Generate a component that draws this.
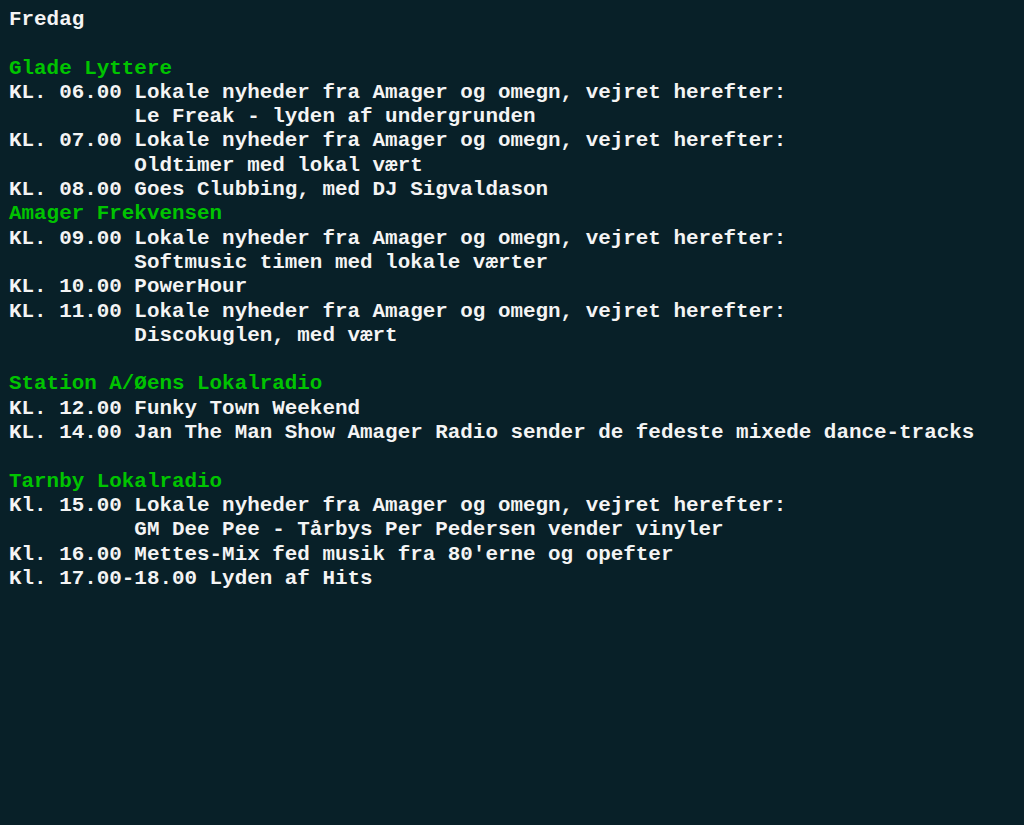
const lines: { t: string; g?: boolean }[] = [
  { t: "Fredag" },
  { t: "" },
  { t: "Glade Lyttere", g: true },
  { t: "KL. 06.00 Lokale nyheder fra Amager og omegn, vejret herefter:" },
  { t: "          Le Freak - lyden af undergrunden" },
  { t: "KL. 07.00 Lokale nyheder fra Amager og omegn, vejret herefter:" },
  { t: "          Oldtimer med lokal vært" },
  { t: "KL. 08.00 Goes Clubbing, med DJ Sigvaldason" },
  { t: "Amager Frekvensen", g: true },
  { t: "KL. 09.00 Lokale nyheder fra Amager og omegn, vejret herefter:" },
  { t: "          Softmusic timen med lokale værter" },
  { t: "KL. 10.00 PowerHour" },
  { t: "KL. 11.00 Lokale nyheder fra Amager og omegn, vejret herefter:" },
  { t: "          Discokuglen, med vært" },
  { t: "" },
  { t: "Station A/Øens Lokalradio", g: true },
  { t: "KL. 12.00 Funky Town Weekend" },
  { t: "KL. 14.00 Jan The Man Show Amager Radio sender de fedeste mixede dance-tracks" },
  { t: "" },
  { t: "Tarnby Lokalradio", g: true },
  { t: "Kl. 15.00 Lokale nyheder fra Amager og omegn, vejret herefter:" },
  { t: "          GM Dee Pee - Tårbys Per Pedersen vender vinyler" },
  { t: "Kl. 16.00 Mettes-Mix fed musik fra 80'erne og opefter" },
  { t: "Kl. 17.00-18.00 Lyden af Hits" },
];

export default function App() {
  return (
    <div className="min-h-[825px] w-full bg-[#082028] px-[9px] pt-[8px]">
      <pre className="font-['Courier_New','Liberation_Mono',monospace] text-[20.9px] leading-[24.3px] font-bold text-[#f4f4f4] whitespace-pre">
        {lines.map((l, i) => (
          <div key={i} className={l.g ? "text-[#00c400]" : ""}>
            {l.t || "\u00a0"}
          </div>
        ))}
      </pre>
    </div>
  );
}
